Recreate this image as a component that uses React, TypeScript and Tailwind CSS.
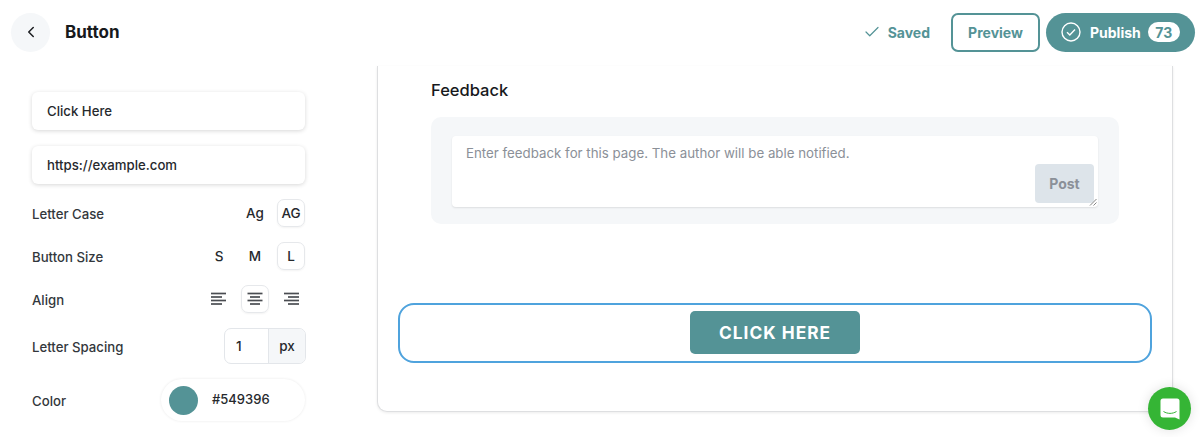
import React from 'react';
import { Check, ChevronLeft } from 'lucide-react';

const TEAL = 'text-[#549396]';

const Option: React.FC<{ active?: boolean; children: React.ReactNode }> = ({ active, children }) => (
  <div
    className={`flex h-[28px] w-[28px] items-center justify-center rounded-[7px] text-[13.5px] font-medium text-[#26292d] ${
      active ? 'border border-[#e6e8eb] shadow-[0_1px_2px_rgba(0,0,0,0.05)]' : ''
    }`}
  >
    {children}
  </div>
);

const AlignIcon: React.FC<{ rows: [number, number][] }> = ({ rows }) => (
  <svg width="16" height="14" viewBox="0 0 16 14" fill="none" stroke="#4a4d52" strokeWidth="1.7">
    {rows.map(([x1, x2], i) => (
      <line key={i} x1={x1} x2={x2} y1={1.5 + i * 3.5} y2={1.5 + i * 3.5} />
    ))}
  </svg>
);

const Row: React.FC<{ label: string; className: string; children: React.ReactNode }> = ({ label, className, children }) => (
  <div className={`flex items-center justify-between ${className}`}>
    <span className="pt-[3px] text-[13.2px] font-medium text-[#33373c]">{label}</span>
    <div className="flex items-center gap-[8px]">{children}</div>
  </div>
);

export default function App() {
  return (
    <div className="relative h-[437px] w-[1200px] overflow-hidden bg-white font-['Inter',sans-serif]">
      <header className="flex h-[64px] items-center pl-[11px] pr-[5px]">
        <div className="flex h-[39px] w-[39px] items-center justify-center rounded-full bg-[#f5f7f9]">
          <ChevronLeft size={18} strokeWidth={2} className="text-[#1c1e21]" />
        </div>
        <h1 className="ml-[15px] pt-[1px] text-[17px] font-bold text-[#17191c]">Button</h1>
        <div className={`ml-auto flex items-center gap-[7px] text-[14px] font-bold ${TEAL}`}>
          <Check size={18} strokeWidth={1.6} />
          <span>Saved</span>
        </div>
        <button className={`ml-[21px] h-[39px] w-[89px] rounded-[7px] border-2 border-[#549396] text-[14px] font-bold ${TEAL}`}>
          Preview
        </button>
        <button className="ml-[6px] flex h-[39px] w-[149px] items-center rounded-full bg-[#549396] pl-[15px] text-[14px] font-bold text-white">
          <svg width="20" height="20" viewBox="0 0 20 20" fill="none" stroke="white" strokeWidth="1.4">
            <circle cx="10" cy="10" r="9" />
            <path d="M6 10.2l2.8 2.8 5.2-5.6" />
          </svg>
          <span className="ml-[9px]">Publish</span>
          <span className={`ml-[7px] flex h-[20px] w-[32px] items-center justify-center rounded-full bg-white ${TEAL}`}>73</span>
        </button>
      </header>

      <div className="flex">
        <aside className="w-[377px] pl-[32px] pr-[71px] pt-[28px]">
          <div className="flex h-[38px] w-[273px] items-center rounded-[6px] bg-white pl-[15px] pt-[2px] text-[13.2px] font-medium text-[#26292d] shadow-[0_1px_4px_rgba(0,0,0,0.16)]">
            Click Here
          </div>
          <div className="mt-[16px] flex h-[38px] w-[273px] items-center rounded-[6px] bg-white pl-[15px] pt-[2px] text-[13.2px] font-medium text-[#26292d] shadow-[0_1px_4px_rgba(0,0,0,0.16)]">
            https://example.com
          </div>
          <Row label="Letter Case" className="mt-[15px] h-[28px] w-[273px]">
            <Option>Ag</Option>
            <Option active>AG</Option>
          </Row>
          <Row label="Button Size" className="mt-[15px] h-[28px] w-[273px]">
            <Option>S</Option>
            <Option>M</Option>
            <Option active>L</Option>
          </Row>
          <Row label="Align" className="mt-[15px] h-[28px] w-[273px]">
            <Option><AlignIcon rows={[[0, 15], [0, 11], [0, 15], [0, 11]]} /></Option>
            <Option active><AlignIcon rows={[[0.5, 15.5], [3, 13], [0.5, 15.5], [3, 13]]} /></Option>
            <Option><AlignIcon rows={[[1, 16], [5, 16], [1, 16], [5, 16]]} /></Option>
          </Row>
          <Row label="Letter Spacing" className="mt-[15px] h-[36px] w-[274px]">
            <div className="flex h-[36px] w-[82px] overflow-hidden rounded-[7px] border border-[#e3e6ea] text-[13.5px] font-medium text-[#26292d]">
              <span className="flex w-[43px] items-center pl-[11px]">1</span>
              <span className="flex flex-1 items-center justify-center border-l border-[#e3e6ea] bg-[#f5f7f9]">px</span>
            </div>
          </Row>
          <Row label="Color" className="mt-[15px] h-[42px] w-[273px]">
            <div className="flex h-[42px] w-[144px] items-center rounded-full bg-white pl-[8px] shadow-[0_0_3px_rgba(0,0,0,0.09)]">
              <span className="h-[29px] w-[29px] rounded-full bg-[#549396]" />
              <span className="ml-[14px] text-[13px] font-medium text-[#26292d]">#549396</span>
            </div>
          </Row>
        </aside>

        <main className="mt-[2px] h-[346px] w-[796px] rounded-b-[10px] border-x border-b border-[#dedfe1] bg-white pl-[53px] pr-[52px] pt-[14px] shadow-[0_1px_3px_rgba(0,0,0,0.08)]">
          <h2 className="text-[16.5px] leading-[21px] font-medium text-[#17191c]">Feedback</h2>
          <section className="mt-[16px] h-[107px] w-[688px] rounded-[10px] bg-[#f5f7f9] px-[21px] pt-[19px]">
            <div className="relative h-[71px] w-[646px] rounded-[4px] bg-white pl-[14px] pt-[8px] text-[13.3px] leading-[18px] text-[#8b9098] shadow-[0_1px_2px_rgba(0,0,0,0.1)]">
              Enter feedback for this page. The author will be able notified.
              <button className="absolute bottom-[4px] right-[4px] h-[39px] w-[59px] rounded-[4px] bg-[#dde4ea] text-[14px] font-bold text-[#8b9098]">
                Post
              </button>
              <svg className="absolute bottom-[1px] right-[1px]" width="8" height="8" viewBox="0 0 8 8" stroke="#666" strokeWidth="0.8">
                <path d="M1 7.5L7.5 1M4.5 7.5L7.5 4.5" />
              </svg>
            </div>
          </section>
          <div className="-ml-[33px] mt-[79px] flex h-[60px] w-[754px] items-center justify-center rounded-[16px] border-2 border-[#4fa3dd]">
            <button className="mb-[2px] h-[43px] w-[170px] rounded-[5px] bg-[#549396] pt-[1px] text-[17.3px] font-bold tracking-[1px] text-white">
              CLICK HERE
            </button>
          </div>
        </main>
      </div>

      <div className="absolute left-[1148px] top-[387px] flex h-[43px] w-[43px] items-center justify-center rounded-full bg-[#35b535] shadow-[0_0_12px_rgba(0,0,0,0.12)]">
        <svg width="20" height="22" viewBox="0 0 20 22">
          <path d="M3 0.5h14a2.5 2.5 0 0 1 2.5 2.5v18.5l-4.5-2H3A2.5 2.5 0 0 1 0.5 17V3A2.5 2.5 0 0 1 3 0.5z" fill="white" />
          <path d="M3.5 13.5c4 2.5 9 2.5 13 0" fill="none" stroke="#35b535" strokeWidth="1" />
        </svg>
      </div>
    </div>
  );
}
